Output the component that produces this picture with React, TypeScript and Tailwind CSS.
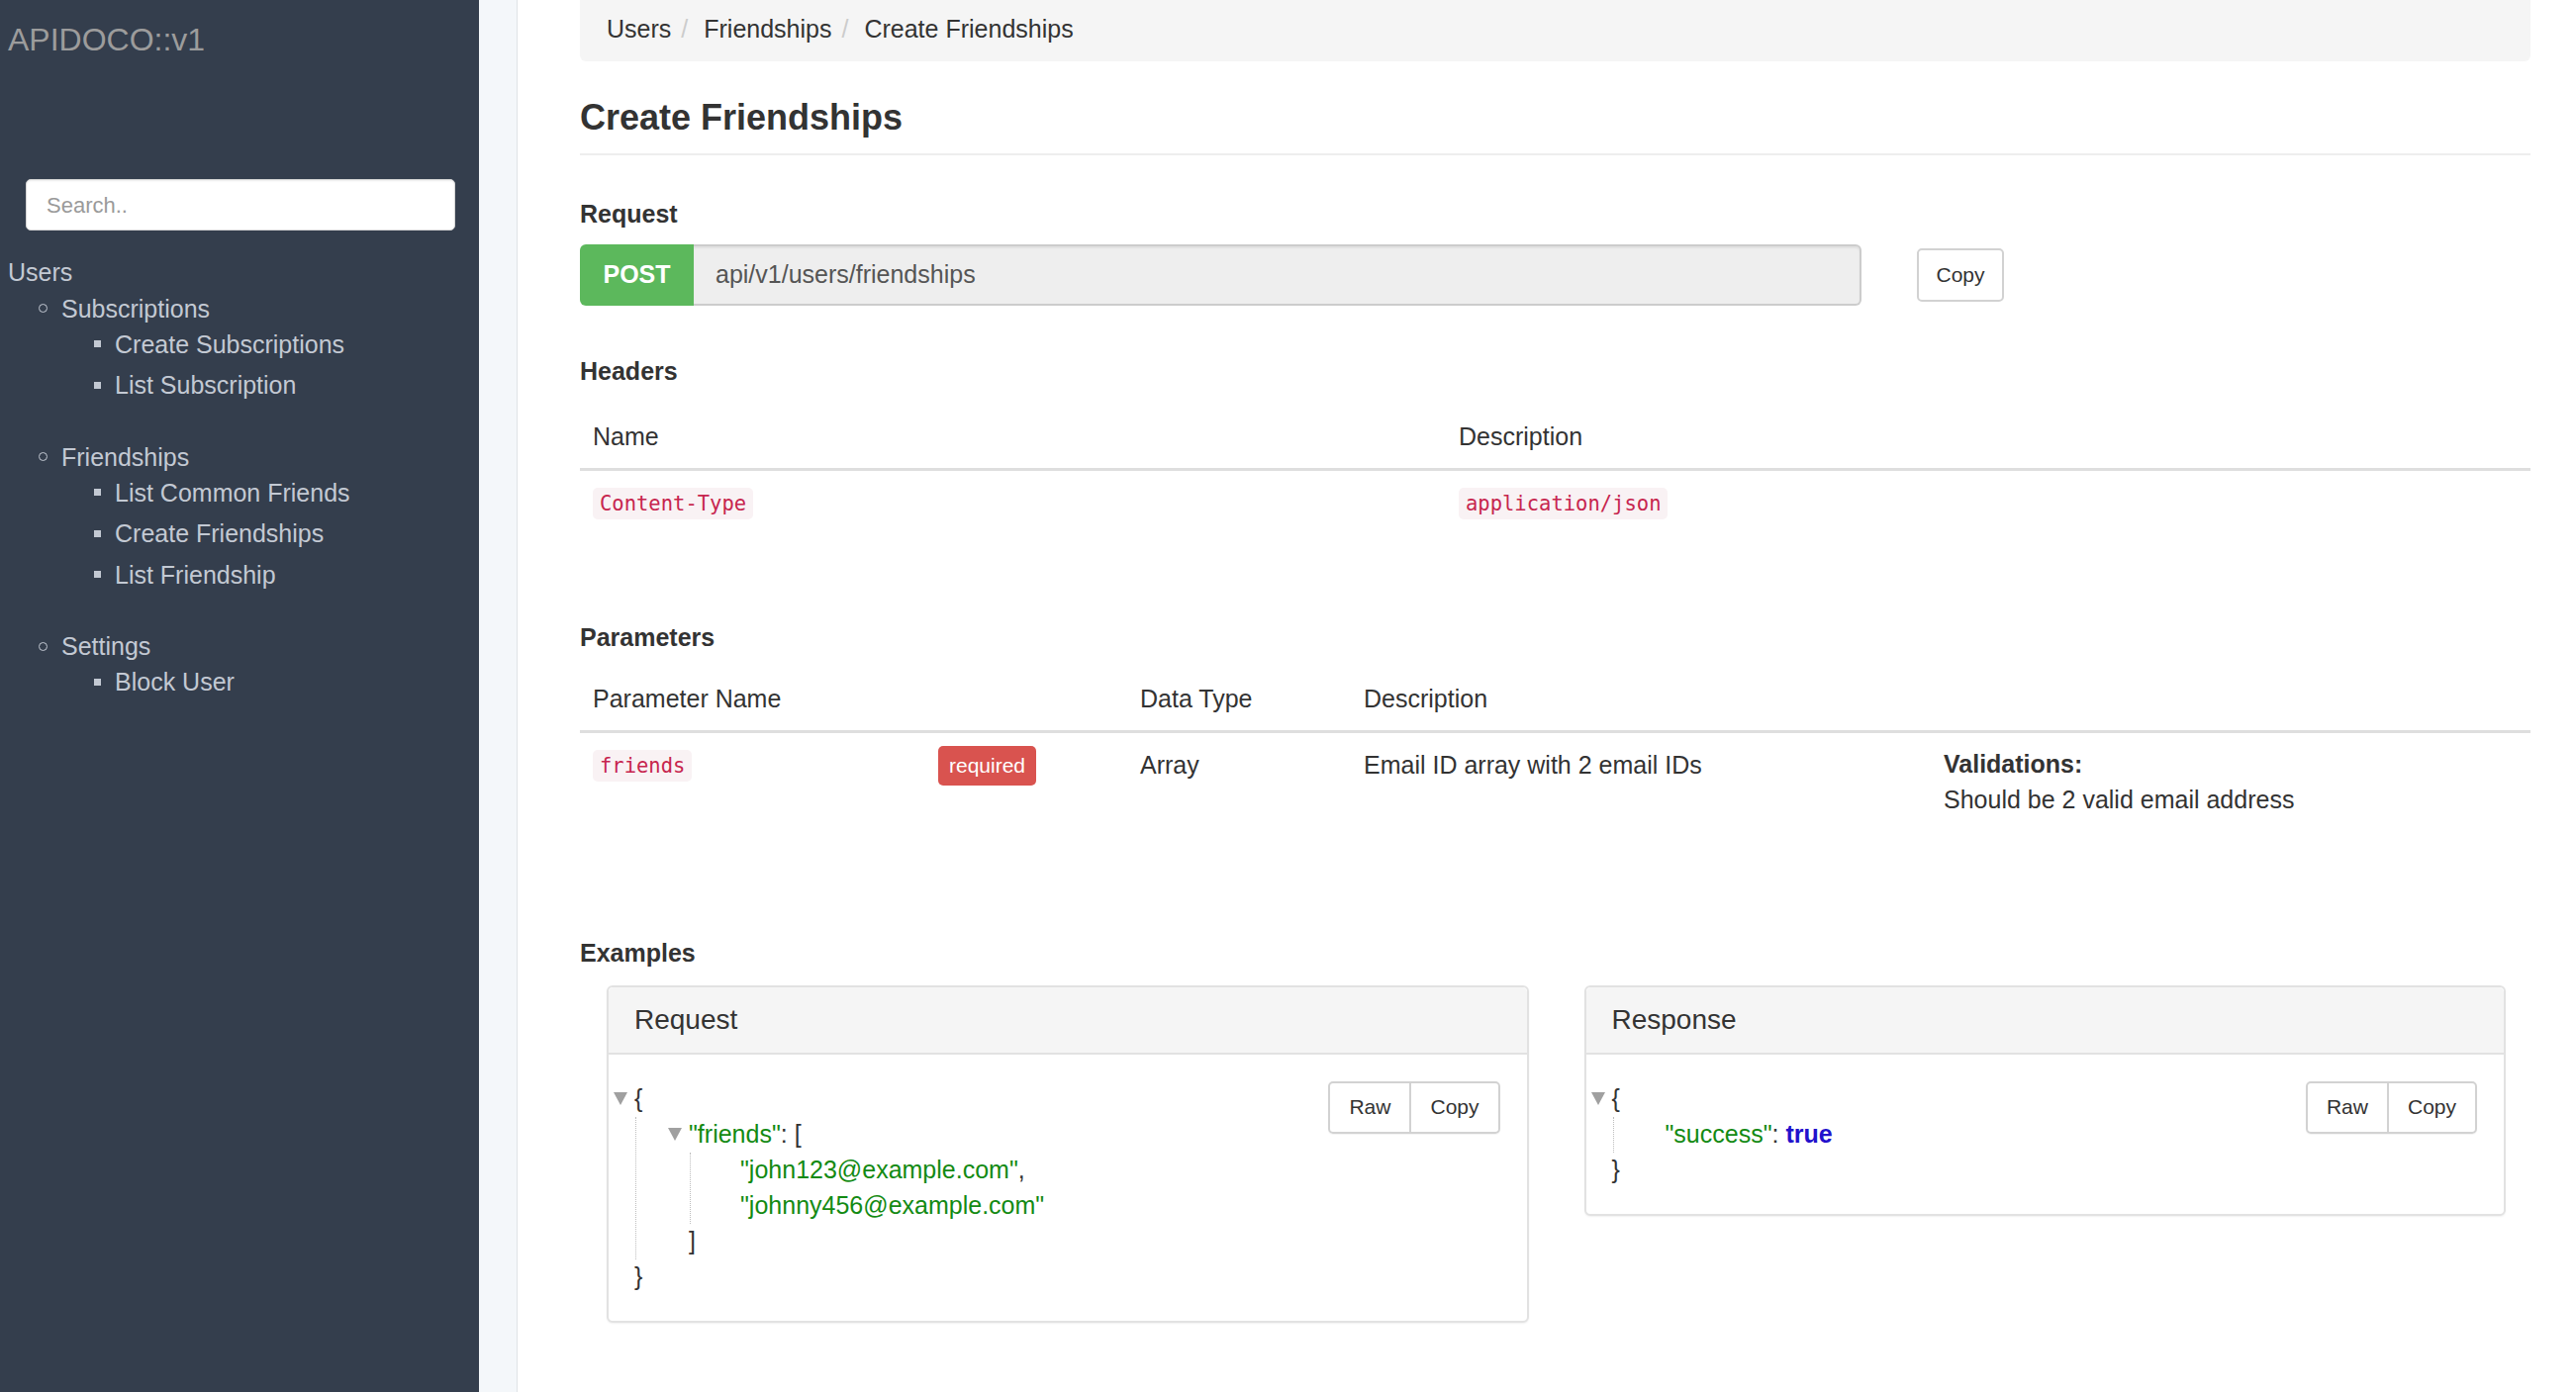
import type { ReactNode } from 'react';

const sans = "font-['Liberation_Sans',Arial,sans-serif]";
const mono = "font-['DejaVu_Sans_Mono','Liberation_Mono',monospace]";

function Circle() {
  return <span className="mr-[14px] h-[9px] w-[9px] shrink-0 rounded-full border border-[#c3c9d3]" />;
}

function Square() {
  return <span className="mr-[14px] h-[7px] w-[7px] shrink-0 bg-[#c3c9d3]" />;
}

function Sidebar() {
  return (
    <aside className="w-[484px] shrink-0 bg-[#343e4d] text-[#c3c9d3]">
      <div className="pl-[8px] pt-[18px] text-[32px] leading-[44px] text-[#9c9c9c]">APIDOCO::v1</div>
      <div className="ml-[26px] mt-[119px] flex h-[52px] w-[434px] items-center rounded-[5px] border border-[#d6d6d6] bg-white pl-[20px] text-[22px] text-[#9a9a9a] shadow-[inset_0_1px_2px_rgba(0,0,0,0.08)]">
        Search..
      </div>
      <div className="mt-[23.5px] text-[25px]">
        <div className="pl-[8px] leading-[37px]">Users</div>
        {[
          { name: 'Subscriptions', items: ['Create Subscriptions', 'List Subscription'] },
          { name: 'Friendships', items: ['List Common Friends', 'Create Friendships', 'List Friendship'] },
          { name: 'Settings', items: ['Block User'] },
        ].map((group) => (
          <div key={group.name} className="mb-[36.5px]">
            <div className="flex items-center pl-[39px] leading-[36px]">
              <Circle />
              {group.name}
            </div>
            <div className="space-y-[5.5px]">
              {group.items.map((item) => (
                <div key={item} className="flex items-center pl-[95px] leading-[36px]">
                  <Square />
                  {item}
                </div>
              ))}
            </div>
          </div>
        ))}
      </div>
    </aside>
  );
}

function Code({ children }: { children: ReactNode }) {
  return (
    <code className={`${mono} inline-block rounded-[5px] bg-[#f9f2f4] px-[7px] text-[20.5px] leading-[32px] text-[#c7254e]`}>
      {children}
    </code>
  );
}

function SectionLabel({ children, className = '' }: { children: ReactNode; className?: string }) {
  return <div className={`text-[25px] font-bold leading-[30px] text-[#333] ${className}`}>{children}</div>;
}

function Tri() {
  return (
    <svg width="14" height="13" viewBox="0 0 14 13" className="-ml-[21px] mr-[7px] shrink-0">
      <polygon points="0,0 14,0 7,13" fill="#a0a0a0" />
    </svg>
  );
}

function Row({ children }: { children: ReactNode }) {
  return <div className="flex h-[36px] items-center whitespace-pre">{children}</div>;
}

function Str({ children }: { children: ReactNode }) {
  return <span className="text-[#138a13]">{children}</span>;
}

function ButtonGroup() {
  return (
    <div className="flex h-[53px] shrink-0 rounded-[5px] border-2 border-[#d2d2d2] text-[21px] text-[#333] shadow-[0_1px_1px_rgba(0,0,0,0.05)]">
      <div className="flex items-center px-[19px]">Raw</div>
      <div className="flex items-center border-l-2 border-[#d2d2d2] px-[19px]">Copy</div>
    </div>
  );
}

function Panel({ title, children }: { title: string; children: ReactNode }) {
  return (
    <div className="rounded-[6px] border-2 border-[#e2e2e2] bg-white shadow-[0_1px_2px_rgba(0,0,0,0.06)]">
      <div className="flex h-[68px] items-center rounded-t-[5px] border-b-2 border-[#e2e2e2] bg-[#f5f5f5] px-[26px] text-[28px] text-[#333]">
        {title}
      </div>
      <div className="flex items-start justify-between pb-[26px] pl-[26px] pr-[27px] pt-[27px] text-[25px] text-[#333]">
        {children}
        <ButtonGroup />
      </div>
    </div>
  );
}

export default function App() {
  return (
    <div className={`${sans} flex min-h-screen w-full bg-white text-[#333]`}>
      <Sidebar />
      <div className="w-[39px] shrink-0 border-r border-[#dfe3e7] bg-[#f4f7fa]" />

      <main className="min-w-0 flex-1 pl-[63px] pr-[46px]">
        {/* Breadcrumb */}
        <div className="flex h-[62px] items-start rounded-b-[6px] bg-[#f5f5f5] pl-[27px] pt-[11px] text-[25px] leading-[36px] text-[#333]">
          <span>Users</span>
          <span className="ml-[10px] mr-[16px] text-[#cccccc]">/</span>
          <span>Friendships</span>
          <span className="ml-[10px] mr-[16px] text-[#cccccc]">/</span>
          <span>Create Friendships</span>
        </div>

        <h1 className="mt-[37px] border-b-2 border-[#eeeeee] pb-[16px] text-[36px] font-bold leading-[40px] text-[#333]">
          Create Friendships
        </h1>

        {/* Request */}
        <SectionLabel className="mt-[43.5px]">Request</SectionLabel>
        <div className="mt-[16px] flex items-center">
          <div className="flex h-[62px] w-[1295px]">
            <div className="flex w-[115px] items-center justify-center rounded-l-[6px] bg-[#5cb85c] text-[25px] font-bold text-white">
              POST
            </div>
            <div className="flex flex-1 items-center rounded-r-[6px] border-2 border-l-0 border-[#cccccc] bg-[#eeeeee] pl-[22px] text-[25px] text-[#555] shadow-[inset_0_2px_2px_rgba(0,0,0,0.06)]">
              api/v1/users/friendships
            </div>
          </div>
          <div className="ml-[56px] flex h-[54px] w-[88px] items-center justify-center rounded-[5px] border-2 border-[#d2d2d2] text-[21px] text-[#333]">
            Copy
          </div>
        </div>

        {/* Headers */}
        <SectionLabel className="mt-[51.5px]">Headers</SectionLabel>
        <div className="mt-[20px] text-[25px] text-[#333]">
          <div className="flex h-[66px] items-center border-b-[3px] border-[#dedede]">
            <div className="w-[875px] pl-[13px]">Name</div>
            <div className="pl-[13px]">Description</div>
          </div>
          <div className="flex py-[13px]">
            <div className="flex h-[40px] w-[875px] items-center pl-[13px]">
              <Code>Content-Type</Code>
            </div>
            <div className="flex h-[40px] items-center pl-[13px]">
              <Code>application/json</Code>
            </div>
          </div>
        </div>

        {/* Parameters */}
        <SectionLabel className="mt-[87px]">Parameters</SectionLabel>
        <div className="mt-[16px] text-[25px] text-[#333]">
          <div className="flex h-[66px] items-center border-b-[3px] border-[#dedede]">
            <div className="w-[553px] pl-[13px]">Parameter Name</div>
            <div className="w-[226px] pl-[13px]">Data Type</div>
            <div className="pl-[13px]">Description</div>
          </div>
          <div className="flex py-[13px]">
            <div className="flex h-[40px] w-[349px] items-center pl-[13px]">
              <Code>friends</Code>
            </div>
            <div className="flex h-[40px] w-[204px] items-center pl-[13px]">
              <span className="inline-flex h-[40px] items-center rounded-[5px] bg-[#d9534f] px-[11px] text-[21px] text-white">
                required
              </span>
            </div>
            <div className="flex h-[40px] w-[226px] items-center pl-[13px]">Array</div>
            <div className="flex h-[40px] w-[586px] items-center pl-[13px]">Email ID array with 2 email IDs</div>
            <div className="pl-[13px] leading-[36px]">
              <div className="font-bold">Validations:</div>
              <div>Should be 2 valid email address</div>
            </div>
          </div>
        </div>

        {/* Examples */}
        <SectionLabel className="mt-[108.5px]">Examples</SectionLabel>
        <div className="mt-[18px] grid grid-cols-2 items-start gap-[56px] pl-[27px] pr-[25px]">
          <Panel title="Request">
            <div>
              <Row>
                <Tri />
                {'{'}
              </Row>
              <div className="ml-[1px] border-l border-dotted border-[#bdbdbd] pl-[53px]">
                <Row>
                  <Tri />
                  <Str>"friends"</Str>: [
                </Row>
                <div className="ml-[1px] border-l border-dotted border-[#bdbdbd] pl-[50px]">
                  <Row>
                    <Str>"john123@example.com"</Str>,
                  </Row>
                  <Row>
                    <Str>"johnny456@example.com"</Str>
                  </Row>
                </div>
                <Row>]</Row>
              </div>
              <Row>{'}'}</Row>
            </div>
          </Panel>

          <Panel title="Response">
            <div>
              <Row>
                <Tri />
                {'{'}
              </Row>
              <div className="ml-[1px] border-l border-dotted border-[#bdbdbd] pl-[52px]">
                <Row>
                  <Str>"success"</Str>: <span className="font-bold text-[#2211cc]">true</span>
                </Row>
              </div>
              <Row>{'}'}</Row>
            </div>
          </Panel>
        </div>
      </main>
    </div>
  );
}
